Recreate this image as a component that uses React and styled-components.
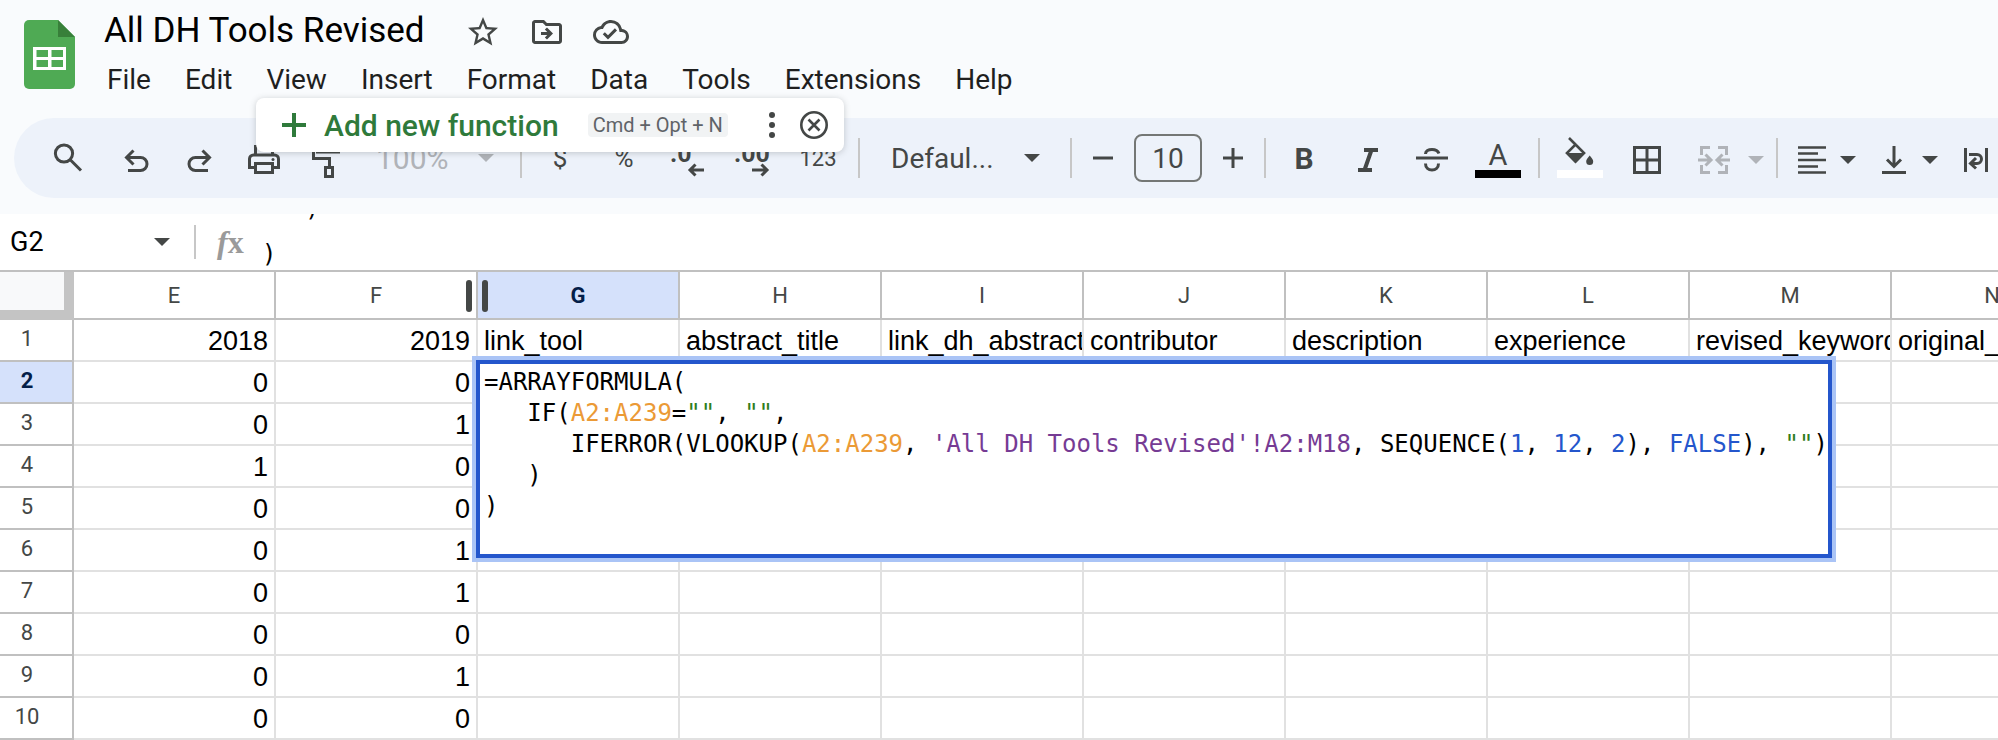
import React from "react";
import styled, { createGlobalStyle, css } from "styled-components";
import { MdStarBorder, MdOutlineDriveFileMove, MdOutlineCloudDone } from "react-icons/md";

const ink = "#444746";
const faded = "#b0b3b8";
const line = "#c0c0c0";
const uiFont = `Roboto, "Liberation Sans", sans-serif`;
const monoFont = `"DejaVu Sans Mono", "Liberation Mono", monospace`;

const GlobalStyle = createGlobalStyle`
  * { box-sizing: border-box; }
  body {
    margin: 0;
    overflow: hidden;
    background: #f9fbfd;
    color: ${ink};
    font-family: ${uiFont};
  }
  button, input { font: inherit; color: inherit; }
  button { padding: 0; border: 0; background: none; }
  svg { display: block; flex: none; }
`;

const Header = styled.header`
  position: relative;
  display: flex;
  gap: 28px;
  height: 118px;
  padding-left: 24px;
`;

const LogoLink = styled.a`
  padding-top: 20px;
`;

const TitleRow = styled.div`
  display: flex;
  align-items: center;
  gap: 28px;
  height: 64px;
`;

const Title = styled.h1`
  margin: 0 12px 2px 0;
  color: #000;
  font-size: 35px;
  font-weight: 400;
  line-height: 44px;
`;

const MenuBar = styled.nav`
  display: flex;
  gap: 34px;
  padding-left: 3px;
`;

const MenuItem = styled.button`
  color: #1f1f1f;
  font-size: 28px;
  line-height: 32px;
`;

const Suggestion = styled.div`
  position: absolute;
  z-index: 3;
  top: 98px;
  left: 256px;
  display: flex;
  align-items: center;
  height: 54px;
  padding: 0 11px 0 26px;
  border-radius: 8px;
  background: #fff;
  box-shadow: 0 1px 6px rgba(60, 64, 67, 0.25);
`;

const AddButton = styled.button`
  display: flex;
  align-items: center;
  gap: 18px;
  color: #2f7a3b;
  font-size: 30px;
  font-weight: 500;
`;

const Shortcut = styled.kbd`
  margin: 0 36px 0 29px;
  padding: 0 5px;
  border-radius: 4px;
  background: #f1f3f4;
  color: #5f6368;
  font-family: ${uiFont};
  font-size: 20px;
  line-height: 24px;
`;

const SuggestionButton = styled.button`
  padding: 0 4px;

  & + & {
    margin-left: 15px;
  }
`;

const Toolbar = styled.div`
  display: flex;
  align-items: center;
  height: 80px;
  margin-left: 14px;
  padding-left: 24px;
  border-radius: 40px 0 0 40px;
  background: #edf2fa;
  overflow: hidden;
`;

const ToolGroup = styled.div`
  display: flex;
  flex: none;
  align-items: center;
  gap: ${(p) => p.$gap || 4}px;
  margin-left: ${(p) => (p.$spaced ? 8 : 0)}px;
`;

const Tool = styled.button`
  display: flex;
  flex: none;
  align-items: center;
  justify-content: center;
  width: ${(p) => p.$width || 60}px;
  height: 60px;
  font-size: ${(p) => p.$size || 26}px;
`;

const Combo = styled.button`
  display: flex;
  flex: none;
  align-items: center;
  justify-content: space-between;
  width: ${(p) => p.$width}px;
  height: 60px;
  padding: 0 ${(p) => p.$end}px 0 ${(p) => p.$start}px;
  color: ${(p) => (p.disabled ? faded : ink)};
  font-size: ${(p) => p.$size || 28}px;
`;

const SplitTool = styled.button`
  display: flex;
  flex: none;
  align-items: center;
  gap: ${(p) => p.$gap || 14}px;
  height: 60px;
  margin-left: ${(p) => (p.$first ? 0 : 8)}px;
  padding: 4px 4px 0 12px;
  color: ${(p) => (p.disabled ? faded : ink)};
`;

const Divider = styled.span`
  flex: none;
  width: 2px;
  height: 40px;
  margin: 0 8px;
  background: #c7c7c7;
`;

const SizeInput = styled.input`
  width: 68px;
  height: 48px;
  padding: 0;
  border: 2px solid #747775;
  border-radius: 8px;
  background: transparent;
  font-size: 28px;
  text-align: center;
`;

const FormulaBar = styled.div`
  display: flex;
  align-items: center;
  height: 56px;
  margin-top: 16px;
  background: #fff;
`;

const NameBox = styled.button`
  display: flex;
  align-items: center;
  justify-content: space-between;
  width: 170px;
  margin-right: 16px;
  padding-left: 10px;
  font-size: 27px;
`;

const CellName = styled.span`
  color: #000;
`;

const Fx = styled.span`
  width: 44px;
  margin-left: 13px;
  color: #9a9a9a;
  font: bold 32px/40px "Liberation Serif", serif;
`;

const FormulaPreview = styled.pre`
  display: flex;
  flex: 1;
  flex-direction: column;
  justify-content: flex-end;
  gap: 15px;
  align-self: stretch;
  margin: 0;
  padding-left: 1px;
  overflow: hidden;
  color: #000;
  font-family: ${monoFont};
  font-size: 24px;
  line-height: 31px;
`;

const PreviewRule = styled.span`
  width: 2px;
  height: 34px;
  margin: 0 8px;
  background: #c7c7c7;
`;

const GridArea = styled.main`
  position: relative;
  overflow: hidden;
  border-top: 2px solid ${line};
  background: #fff;
`;

const Sheet = styled.table`
  width: max-content;
  border-spacing: 0;
  table-layout: fixed;
`;

const headerCell = css`
  padding: 0;
  border-right: 2px solid ${line};
  border-bottom: 2px solid ${line};
  background: ${(p) => (p.$active ? "#d5e1fb" : "#fff")};
  color: ${(p) => (p.$active ? "#041e49" : ink)};
  font-size: 22px;
  font-weight: ${(p) => (p.$active ? 700 : 400)};
`;

const Corner = styled.td`
  width: 74px;
  height: 48px;
  padding: 0;
  border: solid #c4c4c4;
  border-width: 0 10px 10px 0;
  background: #f8f9fa;
`;

const ColumnHead = styled.th`
  ${headerCell}
  position: relative;
  width: 202px;
  height: 48px;
`;

const RowHead = styled.th`
  ${headerCell}
  height: 42px;
  padding: 0 18px 4px 0;
`;

const Cell = styled.td`
  height: 42px;
  max-width: 202px;
  padding: 2px 6px 0;
  border-right: 2px solid #e1e1e1;
  border-bottom: 2px solid #e1e1e1;
  color: #000;
  font-family: "Liberation Sans", Arial, sans-serif;
  font-size: 27px;
  line-height: 36px;
  text-align: ${(p) => (p.$number ? "right" : "left")};
  white-space: nowrap;
  overflow: hidden;
`;

const ResizeHandle = styled.span`
  position: absolute;
  z-index: 1;
  top: 8px;
  right: -12px;
  display: flex;
  justify-content: space-between;
  width: 22px;
  height: 32px;

  &::before,
  &::after {
    content: "";
    width: 6px;
    border-radius: 3px;
    background: ${ink};
  }
`;

const CellEditor = styled.pre`
  position: absolute;
  top: 88px;
  left: 476px;
  margin: 0;
  padding: 3px 0 32px 4px;
  border: 4px solid #2456cc;
  background: #fff;
  box-shadow: 0 0 0 4px #aac4f6;
  color: #000;
  font-family: ${monoFont};
  font-size: 24px;
  line-height: 31px;
`;

const Token = styled.span`
  color: ${(p) => ({ range: "#eb9a36", text: "#2f7d20", sheet: "#763b94", value: "#2456cc" })[p.$kind]};
`;

const Icon = ({ width = 48, height = 48, children }) => (
  <svg width={width} height={height} viewBox={`0 0 ${width} ${height}`} fill="none" stroke="currentColor" strokeWidth="3" aria-hidden="true">
    {children}
  </svg>
);

const Caret = () => (
  <svg width="16" height="8" viewBox="0 0 16 8" fill="currentColor" aria-hidden="true">
    <path d="M0 0h16L8 8z" />
  </svg>
);

const Logo = () => (
  <svg width="52" height="69" viewBox="0 0 52 69" aria-hidden="true">
    <path fill="#4faa54" d="M5 0h29l17 17v47a5 5 0 0 1-5 5H5a5 5 0 0 1-5-5V5a5 5 0 0 1 5-5z" />
    <path fill="#38803a" d="M34 0l17 17H34z" />
    <path fill="#fff" fillRule="evenodd" d="M9 27h33v23H9zM12.500 30v7H24v-7zM27.500 30v7H39v-7zM12.500 40v7H24v-7zM27.500 40v7H39v-7z" />
  </svg>
);

const menus = ["File", "Edit", "View", "Insert", "Format", "Data", "Tools", "Extensions", "Help"];
const columns = ["E", "F", "G", "H", "I", "J", "K", "L", "M", "N"];
const rows = [
  ["2018", "2019", "link_tool", "abstract_title", "link_dh_abstract", "contributor", "description", "experience", "revised_keywords", "original_keywords"],
  ["0", "0"],
  ["0", "1"],
  ["1", "0"],
  ["0", "0"],
  ["0", "1"],
  ["0", "1"],
  ["0", "0"],
  ["0", "1"],
  ["0", "0"],
];

function DocumentHeader() {
  return (
    <Header>
      <LogoLink href="#home" aria-label="Sheets home">
        <Logo />
      </LogoLink>
      <div>
        <TitleRow>
          <Title>All DH Tools Revised</Title>
          <button aria-label="Star"><MdStarBorder size={36} /></button>
          <button aria-label="Move"><MdOutlineDriveFileMove size={36} /></button>
          <button aria-label="Document status"><MdOutlineCloudDone size={36} /></button>
        </TitleRow>
        <MenuBar>
          {menus.map((name) => <MenuItem key={name}>{name}</MenuItem>)}
        </MenuBar>
      </div>
      <Suggestion>
        <AddButton>
          <Icon width={24} height={24}><path strokeWidth="4" d="M12 0v24M0 12h24" /></Icon>
          Add new function
        </AddButton>
        <Shortcut>Cmd + Opt + N</Shortcut>
        <SuggestionButton aria-label="More options">
          <Icon width={8} height={28}>
            <g fill="currentColor" stroke="none">
              <circle cx="4" cy="4" r="3" /><circle cx="4" cy="14" r="3" /><circle cx="4" cy="24" r="3" />
            </g>
          </Icon>
        </SuggestionButton>
        <SuggestionButton aria-label="Dismiss">
          <Icon width={30} height={30}>
            <circle cx="15" cy="15" r="12.700" strokeWidth="2.600" />
            <path d="M9.500 9.500l11 11M20.500 9.500l-11 11" strokeWidth="2.600" />
          </Icon>
        </SuggestionButton>
      </Suggestion>
    </Header>
  );
}

function MainToolbar() {
  return (
    <Toolbar role="toolbar" aria-label="Main">
      <Tool aria-label="Search">
        <Icon><circle cx="20" cy="19.500" r="8.600" /><path d="M26 25.500L37 36.500" /></Icon>
      </Tool>
      <ToolGroup $spaced>
        <Tool aria-label="Undo">
          <Icon><path d="M16 36.500h12.500a6.500 6.500 0 0 0 0-13H14M21.500 16.500l-7 7 7 7" /></Icon>
        </Tool>
        <Tool aria-label="Redo">
          <Icon><path d="M32 36.500H19.500a6.500 6.500 0 0 1 0-13H34M26.500 16.500l7 7-7 7" /></Icon>
        </Tool>
        <Tool aria-label="Print">
          <Icon>
            <path d="M15.500 21v-8.500h17V21M14 33.500H9.500V25a4 4 0 0 1 4-4h21a4 4 0 0 1 4 4v8.500H34M15.500 29.500h17v9h-17z" />
            <circle cx="33" cy="25.500" r="1.500" fill="currentColor" stroke="none" />
          </Icon>
        </Tool>
        <Tool aria-label="Paint format">
          <Icon><path d="M13.500 9.500h21v8.500h-21zM13.500 12.500h-4v12h16V33M21.500 33.500h7v9h-7z" /></Icon>
        </Tool>
        <Combo disabled $width={150} $start={14} $end={18} $size={30}>100%<Caret /></Combo>
      </ToolGroup>
      <Divider />
      <ToolGroup>
        <Tool aria-label="Format as currency">$</Tool>
        <Tool aria-label="Format as percent">%</Tool>
        <Tool aria-label="Decrease decimal places">
          <Icon>
            <text x="6" y="28" fontSize="25" fontWeight="700" fill="currentColor" stroke="none">.0</text>
            <path d="M40 36H27M31.500 30.500L26 36l5.500 5.500" />
          </Icon>
        </Tool>
        <Tool aria-label="Increase decimal places">
          <Icon>
            <text x="6" y="28" fontSize="25" fontWeight="700" fill="currentColor" stroke="none">.00</text>
            <path d="M24 36h14M33.500 30.500L39 36l-5.500 5.500" />
          </Icon>
        </Tool>
        <Tool $width={64} $size={22} aria-label="More formats">123</Tool>
      </ToolGroup>
      <Divider />
      <Combo $width={194} $start={23} $end={22}>Defaul...<Caret /></Combo>
      <Divider />
      <ToolGroup $gap={8}>
        <Tool $width={46} aria-label="Decrease font size">
          <Icon width={20} height={20}><path d="M0 10h20" /></Icon>
        </Tool>
        <SizeInput aria-label="Font size" defaultValue="10" />
        <Tool $width={46} aria-label="Increase font size">
          <Icon width={20} height={20}><path d="M0 10h20M10 0v20" /></Icon>
        </Tool>
      </ToolGroup>
      <Divider />
      <ToolGroup>
        <Tool $size={30} aria-label="Bold"><b>B</b></Tool>
        <Tool aria-label="Italic">
          <Icon><path strokeWidth="4" d="M20 16h14M14 36h14M27.500 16l-7 20" /></Icon>
        </Tool>
        <Tool aria-label="Strikethrough">
          <Icon><path d="M8 24h32M17.500 20c0-3 3-4.500 6.500-4.500s6 1.500 7 4M17.500 29.500c0 4.500 3 6.500 6.500 6.500s6.500-2 6.500-6.500" /></Icon>
        </Tool>
        <Tool $width={64} aria-label="Text color">
          <Icon>
            <text x="24" y="31" fontSize="29" textAnchor="middle" fill="currentColor" stroke="none">A</text>
            <path fill="#000" stroke="none" d="M1 36h46v8H1z" />
          </Icon>
        </Tool>
      </ToolGroup>
      <Divider />
      <ToolGroup>
        <Tool $width={64} aria-label="Fill color">
          <Icon>
            <path strokeWidth="2.600" d="M13 4l7 7M19.500 10.500l8.500 8.500-8.500 8.500-8.500-8.500z" />
            <path fill="currentColor" stroke="none" d="M9.500 19h20l-10 10.500zM33.700 21.500c2.500 3 3.500 4.500 3.500 6a3.500 3.500 0 0 1-7 0c0-1.500 1-3 3.500-6z" />
            <path fill="#fff" stroke="none" d="M1 36h46v8H1z" />
          </Icon>
        </Tool>
        <Tool $width={62} aria-label="Borders">
          <Icon><path d="M11.500 13.500h25v25h-25zM24 13v26M11 26h26" /></Icon>
        </Tool>
      </ToolGroup>
      <SplitTool disabled $gap={18} aria-label="Merge cells">
        <Icon width={32} height={28}>
          <path d="M12 1.500H3.500V9M3.500 19v7.500H12M20 1.500h8.500V9M28.500 19v7.500H20M0 14h12M7.500 8.500L13 14l-5.500 5.500M32 14H20M24.500 8.500L19 14l5.500 5.500" />
        </Icon>
        <Caret />
      </SplitTool>
      <Divider />
      <SplitTool $first aria-label="Horizontal align">
        <Icon width={28} height={28}><path d="M0 1.500h28M0 7.500h20M0 14h28M0 20.500h20M0 26.500h28" strokeWidth="2.700" /></Icon>
        <Caret />
      </SplitTool>
      <SplitTool aria-label="Vertical align">
        <Icon width={28} height={28}><path d="M14 0v20M7 13.500l7 7 7-7M2 26.500h24" /></Icon>
        <Caret />
      </SplitTool>
      <SplitTool aria-label="Text wrapping">
        <Icon width={28} height={28}><path d="M3.500 2v24M24.500 2v24M7 8.500h8a4.500 4.500 0 0 1 0 9H9.500M14 12l-5.500 5.500L14 22.500" /></Icon>
        <Caret />
      </SplitTool>
    </Toolbar>
  );
}

function Formula() {
  return (
    <CellEditor role="textbox" aria-label="Cell G2" aria-multiline="true">
      {"=ARRAYFORMULA(\n   IF("}
      <Token $kind="range">A2:A239</Token>=<Token $kind="text">""</Token>{", "}<Token $kind="text">""</Token>
      {",\n      IFERROR(VLOOKUP("}
      <Token $kind="range">A2:A239</Token>{", "}
      <Token $kind="sheet">'All DH Tools Revised'!A2:M18</Token>{", SEQUENCE("}
      <Token $kind="value">1</Token>{", "}<Token $kind="value">12</Token>{", "}<Token $kind="value">2</Token>{"), "}
      <Token $kind="value">FALSE</Token>{"), "}<Token $kind="text">""</Token>{")\n   )\n)"}
    </CellEditor>
  );
}

function Spreadsheet() {
  return (
    <GridArea>
      <Sheet>
        <thead>
          <tr>
            <Corner />
            {columns.map((name) => (
              <ColumnHead key={name} scope="col" $active={name === "G"}>
                {name}
                {name === "F" && <ResizeHandle />}
              </ColumnHead>
            ))}
          </tr>
        </thead>
        <tbody>
          {rows.map((row, r) => (
            <tr key={r}>
              <RowHead scope="row" $active={r === 1}>{r + 1}</RowHead>
              {columns.map((name, c) => <Cell key={name} $number={c < 2}>{row[c]}</Cell>)}
            </tr>
          ))}
        </tbody>
      </Sheet>
      <Formula />
    </GridArea>
  );
}

export default function App() {
  return (
    <>
      <GlobalStyle />
      <DocumentHeader />
      <MainToolbar />
      <FormulaBar>
        <NameBox aria-label="Name box"><CellName>G2</CellName><Caret /></NameBox>
        <PreviewRule />
        <Fx><i>f</i>x</Fx>
        <FormulaPreview>
          <span>{"   )"}</span>
          <span>{")"}</span>
        </FormulaPreview>
      </FormulaBar>
      <Spreadsheet />
    </>
  );
}
